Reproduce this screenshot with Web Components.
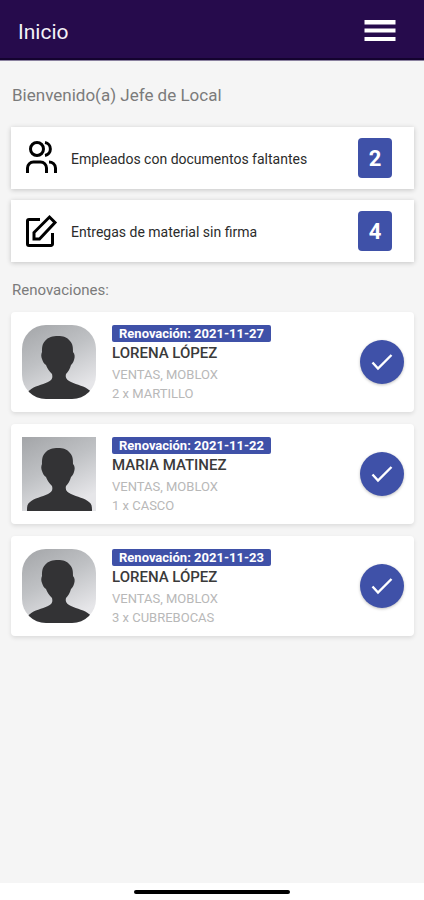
<!DOCTYPE html>
<html lang="es">
<head>
<meta charset="utf-8">
<meta name="viewport" content="width=device-width, initial-scale=1">
<title>Inicio</title>
<style>
  body { margin: 0; font-family: Roboto, "Liberation Sans", sans-serif; color: #2b2b2b; background: #fff; }
</style>
</head>
<body>
<home-screen></home-screen>

<template id="home-screen">
  <style>
    :host { display: flex; flex-direction: column; min-height: 100vh; background: #f5f5f5; --accent: #3f51a8; }
    main { flex: 1; padding: 24px 10px 24px 11px; }
    h1, h2 { margin: 0; font-weight: 400; color: #7b7b7b; }
    h1 { font-size: 17px; line-height: 20px; margin: 0 0 22px 1px; }
    h2 { font-size: 15px; line-height: 20px; margin: 18px 0 12px 1px; }
    .alerts { display: grid; gap: 11px; }
    .renewals { display: grid; gap: 12px; }
  </style>
  <app-bar>Inicio</app-bar>
  <main>
    <h1>Bienvenido(a) Jefe de Local</h1>
    <section class="alerts">
      <alert-card count="2">
        <svg slot="icon" width="36" height="36" viewBox="0 0 36 36" fill="none" stroke="#000" stroke-width="3"><circle cx="14" cy="9" r="6.500"/><path d="M22 2.600a6.500 6.500 0 0 1 0 12.800M4.500 33v-5a6 6 0 0 1 6-6h7a6 6 0 0 1 6 6v5M26 22a6.500 6.500 0 0 1 6.500 6v5"/></svg>
        Empleados con documentos faltantes
      </alert-card>
      <alert-card count="4">
        <svg slot="icon" width="36" height="36" viewBox="0 0 36 36" fill="none" stroke="#000" stroke-width="3"><path d="M17 6.500H6A1.500 1.500 0 0 0 4.500 8v23A1.500 1.500 0 0 0 6 32.500h22a1.500 1.500 0 0 0 1.500-1.500V20M11 26v-6.500L26.500 4l5.500 5.500L16.500 26Z"/></svg>
        Entregas de material sin firma
      </alert-card>
    </section>
    <h2>Renovaciones:</h2>
    <section class="renewals">
      <renewal-card date="2021-11-27" name="LORENA LÓPEZ" item="2 x MARTILLO" rounded></renewal-card>
      <renewal-card date="2021-11-22" name="MARIA MATINEZ" item="1 x CASCO"></renewal-card>
      <renewal-card date="2021-11-23" name="LORENA LÓPEZ" item="3 x CUBREBOCAS" rounded></renewal-card>
    </section>
  </main>
  <home-indicator></home-indicator>
</template>

<template id="app-bar">
  <style>
    :host { display: flex; align-items: center; justify-content: space-between; height: 60px; padding: 0 28px 0 18px; background: #260b4c; border-bottom: 1px solid #8a819f; box-shadow: inset 0 -2px #14032f; color: #f4f2f8; box-sizing: content-box; }
    span { font-size: 21px; line-height: 28px; padding-top: 3px; }
    button { padding: 0; border: 0; background: none; display: flex; }
  </style>
  <span><slot></slot></span>
  <button type="button" aria-label="Menú"><svg width="32" height="24" viewBox="0 0 32 24" fill="#fff"><rect x=".5" y="2" width="31" height="4.500"/><rect x=".5" y="10.500" width="31" height="4"/><rect x=".5" y="19" width="31" height="4"/></svg></button>
</template>

<template id="alert-card">
  <style>
    :host { display: flex; align-items: center; min-height: 62px; padding: 0 22px 0 12px; box-sizing: border-box; background: #fff; box-shadow: 0 1px 5px rgba(0,0,0,.2); }
    ::slotted(svg) { display: block; }
    .label { flex: 1; margin-left: 12px; font-size: 14px; line-height: 20px; padding-top: 2px; }
    .count { display: grid; place-items: center; width: 34px; height: 40px; border-radius: 4px; background: var(--accent); color: #fff; font-size: 22px; font-weight: 700; }
  </style>
  <slot name="icon"></slot>
  <span class="label"><slot></slot></span>
  <span class="count"></span>
</template>

<template id="renewal-card">
  <style>
    :host { display: flex; align-items: center; min-height: 100px; padding: 0 10px 0 11px; box-sizing: border-box; background: #fff; border-radius: 4px; box-shadow: 0 2px 4px rgba(0,0,0,.1); }
    .avatar { width: 74px; height: 74px; flex: none; display: block; }
    :host([rounded]) .avatar { border-radius: 24px; }
    .info { flex: 1; margin-left: 16px; padding-top: 4px; display: flex; flex-direction: column; align-items: flex-start; }
    .tag { padding: 0 7px; border-radius: 2px; background: var(--accent); color: #fff; font-size: 13px; font-weight: 700; line-height: 17px; }
    .name { font-size: 15px; font-weight: 500; line-height: 23px; color: #3a3a3a; }
    .line { font-size: 13px; line-height: 19px; color: #b8b8b8; }
    button { width: 44px; height: 44px; padding: 0; border: 0; border-radius: 50%; background: var(--accent); display: grid; place-items: center; box-shadow: 0 1px 3px rgba(0,0,0,.25); }
  </style>
  <svg class="avatar" viewBox="0 0 74 74" role="img" aria-label="Foto">
    <defs><linearGradient id="g" x1="0" y1="0" x2=".5" y2="1"><stop offset="0" stop-color="#a3a5a8"/><stop offset=".5" stop-color="#bfc1c4"/><stop offset="1" stop-color="#e6e6e9"/></linearGradient></defs>
    <rect width="74" height="74" fill="url(#g)"/>
    <path fill="#333335" d="M36 11c5 0 9 1 12 5 3 3 3 7 3 11 2 2 2 5 1 8-1 3-2 4-3 5-1 4-3 7-5 9-1 4 1 6 5 8 6 3 14 4 18 8 3 2 3 5 3 9H5c0-4 0-7 3-9 4-4 12-5 18-8 4-2 5-4 4-8-3-3-5-6-6-9-2-1-3-3-4-6-1-2-1-5 0-7 0-4 0-8 3-11 3-4 8-5 13-5Z"/>
  </svg>
  <div class="info">
    <span class="tag"></span>
    <span class="name"></span>
    <span class="line">VENTAS, MOBLOX</span>
    <span class="line item"></span>
  </div>
  <button type="button" aria-label="Confirmar renovación"><svg width="24" height="20" viewBox="0 0 24 20" fill="none" stroke="#fff" stroke-width="2.400"><path d="M2.500 10.500l5.500 6L21.500 3"/></svg></button>
</template>

<template id="home-indicator">
  <style>
    :host { display: flex; justify-content: center; align-items: center; height: 17px; background: #fff; }
    div { width: 37%; height: 4px; border-radius: 2px; background: #000; }
  </style>
  <div></div>
</template>

<script>
  class Base extends HTMLElement {
    constructor() {
      super();
      const t = document.getElementById(this.localName);
      this.attachShadow({ mode: "open" }).append(t.content.cloneNode(true));
    }
    fill(selector, text) { this.shadowRoot.querySelector(selector).textContent = text; }
  }
  customElements.define("app-bar", class extends Base {});
  customElements.define("home-indicator", class extends Base {});
  customElements.define("alert-card", class extends Base {
    connectedCallback() { this.fill(".count", this.getAttribute("count")); }
  });
  customElements.define("renewal-card", class extends Base {
    connectedCallback() {
      this.fill(".tag", "Renovación: " + this.getAttribute("date"));
      this.fill(".name", this.getAttribute("name"));
      this.fill(".item", this.getAttribute("item"));
    }
  });
  customElements.define("home-screen", class extends Base {});
</script>
</body>
</html>
